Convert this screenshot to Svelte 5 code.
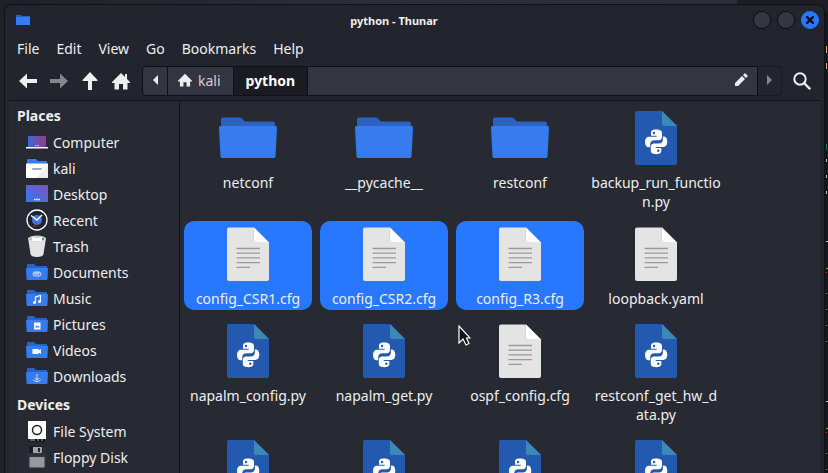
<script lang="ts">
  type Kind = 'folder' | 'python' | 'text';

  interface Entry {
    name: string;
    kind: Kind;
    selected?: boolean;
  }

  const menus = ['File', 'Edit', 'View', 'Go', 'Bookmarks', 'Help'];

  const groups = [
    {
      title: 'Places',
      items: [
        'Computer',
        'kali',
        'Desktop',
        'Recent',
        'Trash',
        'Documents',
        'Music',
        'Pictures',
        'Videos',
        'Downloads'
      ]
    },
    { title: 'Devices', items: ['File System', 'Floppy Disk'] }
  ];

  const emblemFolders = ['Documents', 'Music', 'Pictures', 'Videos', 'Downloads'];

  const entries: Entry[] = [
    { name: 'netconf', kind: 'folder' },
    { name: '__pycache__', kind: 'folder' },
    { name: 'restconf', kind: 'folder' },
    { name: 'backup_run_function.py', kind: 'python' },
    { name: 'config_CSR1.cfg', kind: 'text', selected: true },
    { name: 'config_CSR2.cfg', kind: 'text', selected: true },
    { name: 'config_R3.cfg', kind: 'text', selected: true },
    { name: 'loopback.yaml', kind: 'text' },
    { name: 'napalm_config.py', kind: 'python' },
    { name: 'napalm_get.py', kind: 'python' },
    { name: 'ospf_config.cfg', kind: 'text' },
    { name: 'restconf_get_hw_data.py', kind: 'python' },
    { name: '', kind: 'python' },
    { name: '', kind: 'python' },
    { name: '', kind: 'python' },
    { name: '', kind: 'python' }
  ];
</script>

{#snippet fileIcon(kind: Kind)}
  <svg class="file-icon" viewBox="0 0 64 64" aria-hidden="true">
    {#if kind === 'folder'}
      <path d="M5 24V13q0-1.500 1.500-1.500H24q1 0 2 1l3 3h28q2 0 2 2V24z" fill="#2c62c0" />
      <path d="M4.500 20h55q1.500 0 1.500 1.500L59.500 50.500q-.1 1.500-1.500 1.500H6q-1.400 0-1.500-1.500L3 21.500Q3 20 4.500 20z" fill="#367bf0" />
    {:else if kind === 'python'}
      <path d="M12.500 5H38l15 15v37q0 2-2 2H13q-2 0-2-2V7q0-2 1.500-2z" fill="#2459b0" />
      <path d="M38 5l15 15H40q-2 0-2-2z" fill="#3a89b9" />
      <g fill="#fff">
        <path d="M32 23.500c-4.500 0-5 1.800-5 3.400v2.800h5.600v1H25c-2.300 0-4 1.800-4 5.200 0 3.600 1.600 5.300 3.700 5.300h1.500v-3c0-2.400 1.800-4 4-4h4.600c2 0 3.200-1.400 3.200-3.200v-4.100c0-2-1.700-3.400-6-3.400z" />
        <path d="M32.300 48.200c4.500 0 5-1.800 5-3.400V42h-5.600v-1h7.600c2.300 0 4-1.800 4-5.200 0-3.600-1.600-5.300-3.700-5.300h-.7v3c0 2.400-1.800 4-4 4H30c-2 0-3.200 1.400-3.200 3.200v4.100c0 2 1.500 3.400 5.500 3.400z" />
      </g>
      <circle cx="30" cy="27" r="1.200" fill="#2459b0" />
      <circle cx="34.300" cy="44.700" r="1.200" fill="#2459b0" />
    {:else}
      <path d="M13 5.500h25l15 15V57q0 2-2 2H13q-2 0-2-2V7.500q0-2 2-2z" fill="#e4e4e4" />
      <path d="M38 6.500l14.500 14.500H40q-2.500 0-2.500-2.500V6z" fill="#c9c9c9" />
      <path d="M38 5.500l15 15H40q-2 0-2-2z" fill="#fff" />
      <path d="M20.500 26.500H44M20.500 31.200H44M20.500 35.900H44M20.500 40.600H44M20.500 45.300H34" stroke="#999" stroke-width="1.300" />
    {/if}
  </svg>
{/snippet}

{#snippet placeIcon(name: string)}
  <svg class="place-icon" viewBox="0 0 22 22" aria-hidden="true">
    {#if name === 'Computer'}
      <path d="M2 5h18v11H2z" fill="url(#screen)" />
      <path d="M9 14.500h4" stroke="#ccd" stroke-dasharray="1 .5" />
      <path d="M0 16h22v1.500H0z" fill="#fff" />
    {:else if name === 'kali'}
      <path d="M1 7V3q0-1 1-1h8l2 2h8q1 0 1 1v2z" fill="#367bf0" />
      <path d="M0 6.500h22V21H0z" fill="#fff" />
      <path d="M22 9v12H10z" fill="#ededed" />
      <path d="M7 12h8" stroke="#aaa" stroke-width="2" stroke-linecap="round" />
    {:else if name === 'Desktop'}
      <path d="M0 2h22v17H0z" fill="url(#screen2)" />
      <path d="M8 16.500h6" stroke="#fff" stroke-width="1.500" stroke-dasharray="1.500 .700" />
    {:else if name === 'Recent'}
      <circle cx="11" cy="11" r="10" fill="#23252e" stroke="#fff" stroke-width="1.300" />
      <circle cx="11" cy="11" r="5" fill="#367bf0" />
      <path d="M11 11l-3 7" stroke="#c33" />
      <path d="M5 6.500l6 4.500 5-5" stroke="#fff" stroke-width="1.500" fill="none" />
    {:else if name === 'Trash'}
      <path d="M2 3h18l-2.500 16q-.5 3-6.500 3t-6.500-3z" fill="#e3e3e3" />
      <ellipse cx="11" cy="3.500" rx="9" ry="3" fill="#c9cbc9" />
      <path d="M4 4l3-2 4 1 4-1 3 2-3 2H7z" fill="#fff" />
      <path d="M4 3h2v2H4z" fill="#e7c14a" />
      <path d="M16 3h2v2h-2z" fill="#3fa77c" />
    {:else if emblemFolders.includes(name)}
      <path d="M1 7V4q0-1 1-1h6l2 2h10q1 0 1 1v3H1z" fill="#2c62c0" />
      <path d="M0 7h22l-.5 11q0 1-1 1h-19q-1 0-1-1z" fill="#367bf0" />
      {#if name === 'Documents'}
        <path d="M13.500 11H9q-2 0-2 2t2 2h4q2 0 2-2t-2-1H9.500q-1 0-1 1h4.500" fill="none" stroke="#d5e3fc" />
      {:else if name === 'Music'}
        <path d="M9.500 15.500V10l5-1.500v6" fill="none" stroke="#fff" stroke-width="1.200" />
        <circle cx="8.500" cy="15.500" r="1.500" fill="#fff" />
        <circle cx="13.500" cy="14.500" r="1.500" fill="#fff" />
      {:else if name === 'Pictures'}
        <path d="M8 9.500h6.500v7H8z" fill="#fff" />
        <path d="M9 14.500l1.500-2 1 1 1-1 1 2z" fill="#367bf0" />
      {:else if name === 'Videos'}
        <path d="M6.500 10h6v1.500l2.500-1.500v5l-2.500-1.500V15h-6z" fill="#fff" />
      {:else}
        <path d="M11 9v6M8.800 13l2.200 2.200 2.200-2.200M7.500 14.500q.5 2 3.500 2t3.500-2" fill="none" stroke="#d5e3fc" />
      {/if}
    {:else if name === 'File System'}
      <path d="M3 19h16v2.500H3z" fill="#111" />
      <path d="M4 20h5M11 20h2M15 20h2" stroke="#777" stroke-width="1.500" />
      <path d="M2 1h18v18H2z" fill="#fff" />
      <circle cx="11" cy="10" r="4.500" fill="none" stroke="#222" stroke-width="1.500" />
    {:else}
      <path d="M2 1h17l1 2v18H2z" fill="#30323b" />
      <path d="M3 0h14v7H3z" fill="#1b1c22" />
      <path d="M7 1h9v6H7z" fill="#a2a3a9" />
      <path d="M12 2h2v4h-2z" fill="#222" />
      <path d="M3.500 11h15v10.500h-15z" fill="#97989e" />
    {/if}
  </svg>
{/snippet}

<svg class="defs" width="0" height="0" aria-hidden="true">
  <defs>
    <linearGradient id="screen" x1="0" y1="0" x2="1" y2="0">
      <stop stop-color="#3a69d8" />
      <stop offset="1" stop-color="#963a84" />
    </linearGradient>
    <linearGradient id="screen2" x1="0" y1="1" x2="1" y2="0">
      <stop stop-color="#2f7cf6" />
      <stop offset="1" stop-color="#8050b8" />
    </linearGradient>
  </defs>
</svg>

<div class="desktop">
  <!-- sliver of the terminal behind the window -->
  <svg class="terminal" width="3" height="473" viewBox="0 0 3 473" aria-hidden="true">
    <path d="M0 12h3v461H0z" fill="#14161c" />
    <path d="M1.500 46v7M1.500 63v6" stroke="#d9a066" />
    <path d="M1.500 144v6" stroke="#2c7566" />
    <path d="M1.500 159v3M1.500 175v3M1.500 191v3" stroke="#a9c4ae" />
    <path d="M1 241.500h2M1 401.500h2" stroke="#ccc" />
    <path d="M1 268.500h2M1 293.500h1M1 309.500h1M1 325.500h1M1 341.500h1M1 428.500h2M1 453.500h1M1 469.500h1" stroke="#b08860" />
    <path d="M1 272.500h1M1 432.500h1" stroke="#a0521c" />
  </svg>
  <div class="window">
    <header class="titlebar">
      <svg class="app-icon" viewBox="0 0 16 16" aria-hidden="true">
        <path d="M1 4V3h5l1 1h8v3H1z" fill="#2c62c0" />
        <path d="M1 5h14v8H1z" fill="#367bf0" />
      </svg>
      <h1>python - Thunar</h1>
      <div class="controls">
        <button aria-label="Minimize"></button>
        <button aria-label="Maximize"></button>
        <button class="close" aria-label="Close">
          <svg width="8" height="8" viewBox="0 0 8 8"><path d="M0 0l8 8M8 0L0 8" stroke="#101623" stroke-width="2.500" /></svg>
        </button>
      </div>
    </header>

    <nav class="menubar">
      {#each menus as menu}
        <button>{menu}</button>
      {/each}
    </nav>

    <div class="toolbar">
      <div class="actions">
        <button aria-label="Back">
          <svg viewBox="0 0 18 18"><path d="M0 9l8-7.500V7h10v4H8v5.500z" /></svg>
        </button>
        <button aria-label="Forward" disabled>
          <svg viewBox="0 0 18 18"><path d="M18 9l-8-7.500V7H0v4h10v5.500z" /></svg>
        </button>
        <button aria-label="Up">
          <svg viewBox="0 0 18 18"><path d="M9 0l7.500 8v1H11v9H7V9H1.500V8z" /></svg>
        </button>
        <button aria-label="Home">
          <svg viewBox="0 0 18 18"><path d="M9 1l4 4V2h2v5l3 3v1h-2.500v6.500H11V12H7v5.500H2.500V11H0v-1z" /></svg>
        </button>
      </div>
      <div class="pathbar">
        <button class="scroll" aria-label="Scroll left">
          <svg width="5" height="10" viewBox="0 0 5 10"><path d="M5 0v10L0 5z" /></svg>
        </button>
        <button class="crumb">
          <svg width="14" height="14" viewBox="0 0 18 18"><path d="M9 1l9 9v1h-2.500v6.500H11V12H7v5.500H2.500V11H0v-1z" /></svg>
          kali
        </button>
        <button class="crumb current">python</button>
        <button class="location" aria-label="Edit location">
          <svg width="14" height="14" viewBox="0 0 14 14"><path d="M1 10l7-7 3 3-7 7H1zM9 2l1.500-1.500q.5-.5 1 0l2 2q.5.500 0 1L12 5z" /></svg>
        </button>
        <button class="scroll next" aria-label="Scroll right" disabled>
          <svg width="5" height="10" viewBox="0 0 5 10"><path d="M0 0v10l5-5z" /></svg>
        </button>
      </div>
      <button class="search" aria-label="Search">
        <svg width="18" height="18" viewBox="0 0 18 18">
          <circle cx="7" cy="7" r="5.700" fill="none" stroke="#eee" stroke-width="2" />
          <path d="M11 11l6.200 6.200" stroke="#eee" stroke-width="2.400" />
        </svg>
      </button>
    </div>

    <div class="panes">
      <aside>
        {#each groups as group}
          <h2>{group.title}</h2>
          <ul>
            {#each group.items as item}
              <li><a href="#{item}">{@render placeIcon(item)}{item}</a></li>
            {/each}
          </ul>
        {/each}
      </aside>
      <main>
        {#each entries as entry}
          <div class="entry" class:selected={entry.selected}>
            {@render fileIcon(entry.kind)}
            <span>{entry.name}</span>
          </div>
        {/each}
        <svg class="cursor" viewBox="0 0 13 21" aria-hidden="true">
          <path d="M1 1v17l4-4 3 6 3-1.500L8.500 13H12z" fill="#111" stroke="#fff" stroke-width="1.200" />
        </svg>
      </main>
    </div>
  </div>
</div>

<style>
  :global(body) {
    margin: 0;
    background: #1e2028;
  }
  .defs {
    position: absolute;
  }
  .desktop {
    position: relative;
    display: flex;
    box-sizing: border-box;
    height: 100vh;
    padding: 4px 3px 0 4px;
    overflow: hidden;
    color: #eee;
    background: linear-gradient(90deg, #1f2128, #2d303b 50%, #2b2d37 89%, #1d1e23 89%);
    font-family: 'Noto Sans', sans-serif;
    font-size: 14px;
    line-height: 19px;
  }
  .terminal {
    position: absolute;
    top: 0;
    right: 0;
  }
  .window {
    display: flex;
    flex: 1;
    flex-direction: column;
    min-width: 0;
    border: 1px solid #111217;
    border-bottom: 0;
    border-radius: 8px 8px 0 0;
    background: #23252e;
  }
  button {
    display: flex;
    align-items: center;
    justify-content: center;
    margin: 0;
    padding: 0;
    border: 0;
    color: inherit;
    background: none;
    font: inherit;
  }
  button svg {
    fill: #eee;
  }
  button:disabled svg {
    fill: #85868a;
  }
  .titlebar {
    display: flex;
    align-items: center;
    height: 30px;
    padding: 0 5px 0 10px;
  }
  .app-icon {
    width: 16px;
    height: 16px;
  }
  h1 {
    flex: 1;
    margin: 0;
    padding-left: 4px;
    font-size: 11px;
    font-weight: 700;
    text-align: center;
  }
  .controls {
    display: flex;
    gap: 6px;
  }
  .controls button {
    box-sizing: border-box;
    width: 18px;
    height: 18px;
    border: 1px solid #0d0e12;
    border-radius: 50%;
    background: #343742;
  }
  .controls .close {
    border-color: #2777ff;
    background: #2777ff;
  }
  .menubar {
    display: flex;
    gap: 17px;
    height: 26px;
    margin: 0 4px;
    padding: 0 8px;
    border-bottom: 1px solid #1f2129;
  }
  .toolbar {
    display: flex;
    align-items: center;
    height: 38px;
    margin: 0 4px;
    border-bottom: 1px solid #101116;
  }
  .actions {
    display: flex;
    gap: 13px;
    padding: 0 12px 0 10px;
  }
  .actions svg {
    width: 18px;
    height: 18px;
  }
  .pathbar {
    display: flex;
    flex: 1;
    height: 30px;
  }
  .pathbar button {
    box-sizing: border-box;
    padding-bottom: 2px;
    border: 1px solid #101116;
    border-left-width: 0;
    background: #333641;
  }
  .pathbar .scroll {
    width: 26px;
    border-left-width: 1px;
    border-radius: 4px 0 0 4px;
  }
  .pathbar .next {
    width: 24px;
    border-color: #1a1b22;
    border-left-width: 0;
    border-radius: 0 4px 4px 0;
    background: #23252e;
  }
  .pathbar .crumb {
    gap: 6px;
    padding: 0 12px 2px 10px;
    color: #cfd0d3;
  }
  .pathbar .current {
    padding: 0 12px 2px;
    color: #fff;
    background: #1b1c23;
    font-weight: 700;
  }
  .pathbar .location {
    flex: 1;
    justify-content: flex-end;
    padding-right: 9px;
  }
  .search {
    width: 38px;
    height: 30px;
    padding-left: 2px;
  }
  .panes {
    display: flex;
    flex: 1;
    min-height: 0;
    margin: 0 4px;
    background: #272933;
  }
  aside {
    flex: none;
    box-sizing: border-box;
    width: 171px;
    padding-top: 1px;
    overflow: hidden;
    border-right: 1px solid #101116;
  }
  h2 {
    margin: 0;
    padding: 4px 8px;
    font-size: 14px;
    font-weight: 700;
  }
  ul {
    margin: 0 0 2px;
    padding: 0;
    list-style: none;
  }
  a {
    display: flex;
    align-items: center;
    gap: 5px;
    height: 26px;
    padding-left: 17px;
    color: inherit;
    text-decoration: none;
  }
  .place-icon {
    width: 22px;
    height: 22px;
  }
  main {
    position: relative;
    display: grid;
    flex: 1;
    grid-template-columns: repeat(auto-fill, 128px);
    align-content: start;
    align-items: start;
    gap: 8px;
    padding: 4px;
    overflow: hidden;
  }
  .entry {
    display: flex;
    flex-direction: column;
    align-items: center;
    gap: 3px;
    padding: 1px 0 2px;
    border-radius: 10px;
    text-align: center;
  }
  .entry.selected {
    background: #2777ff;
  }
  .file-icon {
    width: 64px;
    height: 64px;
  }
  .entry span {
    width: 130px;
    min-height: 19px;
    word-break: break-all;
  }
  .cursor {
    position: absolute;
    top: 224px;
    left: 278px;
    width: 13px;
    height: 21px;
  }
</style>
